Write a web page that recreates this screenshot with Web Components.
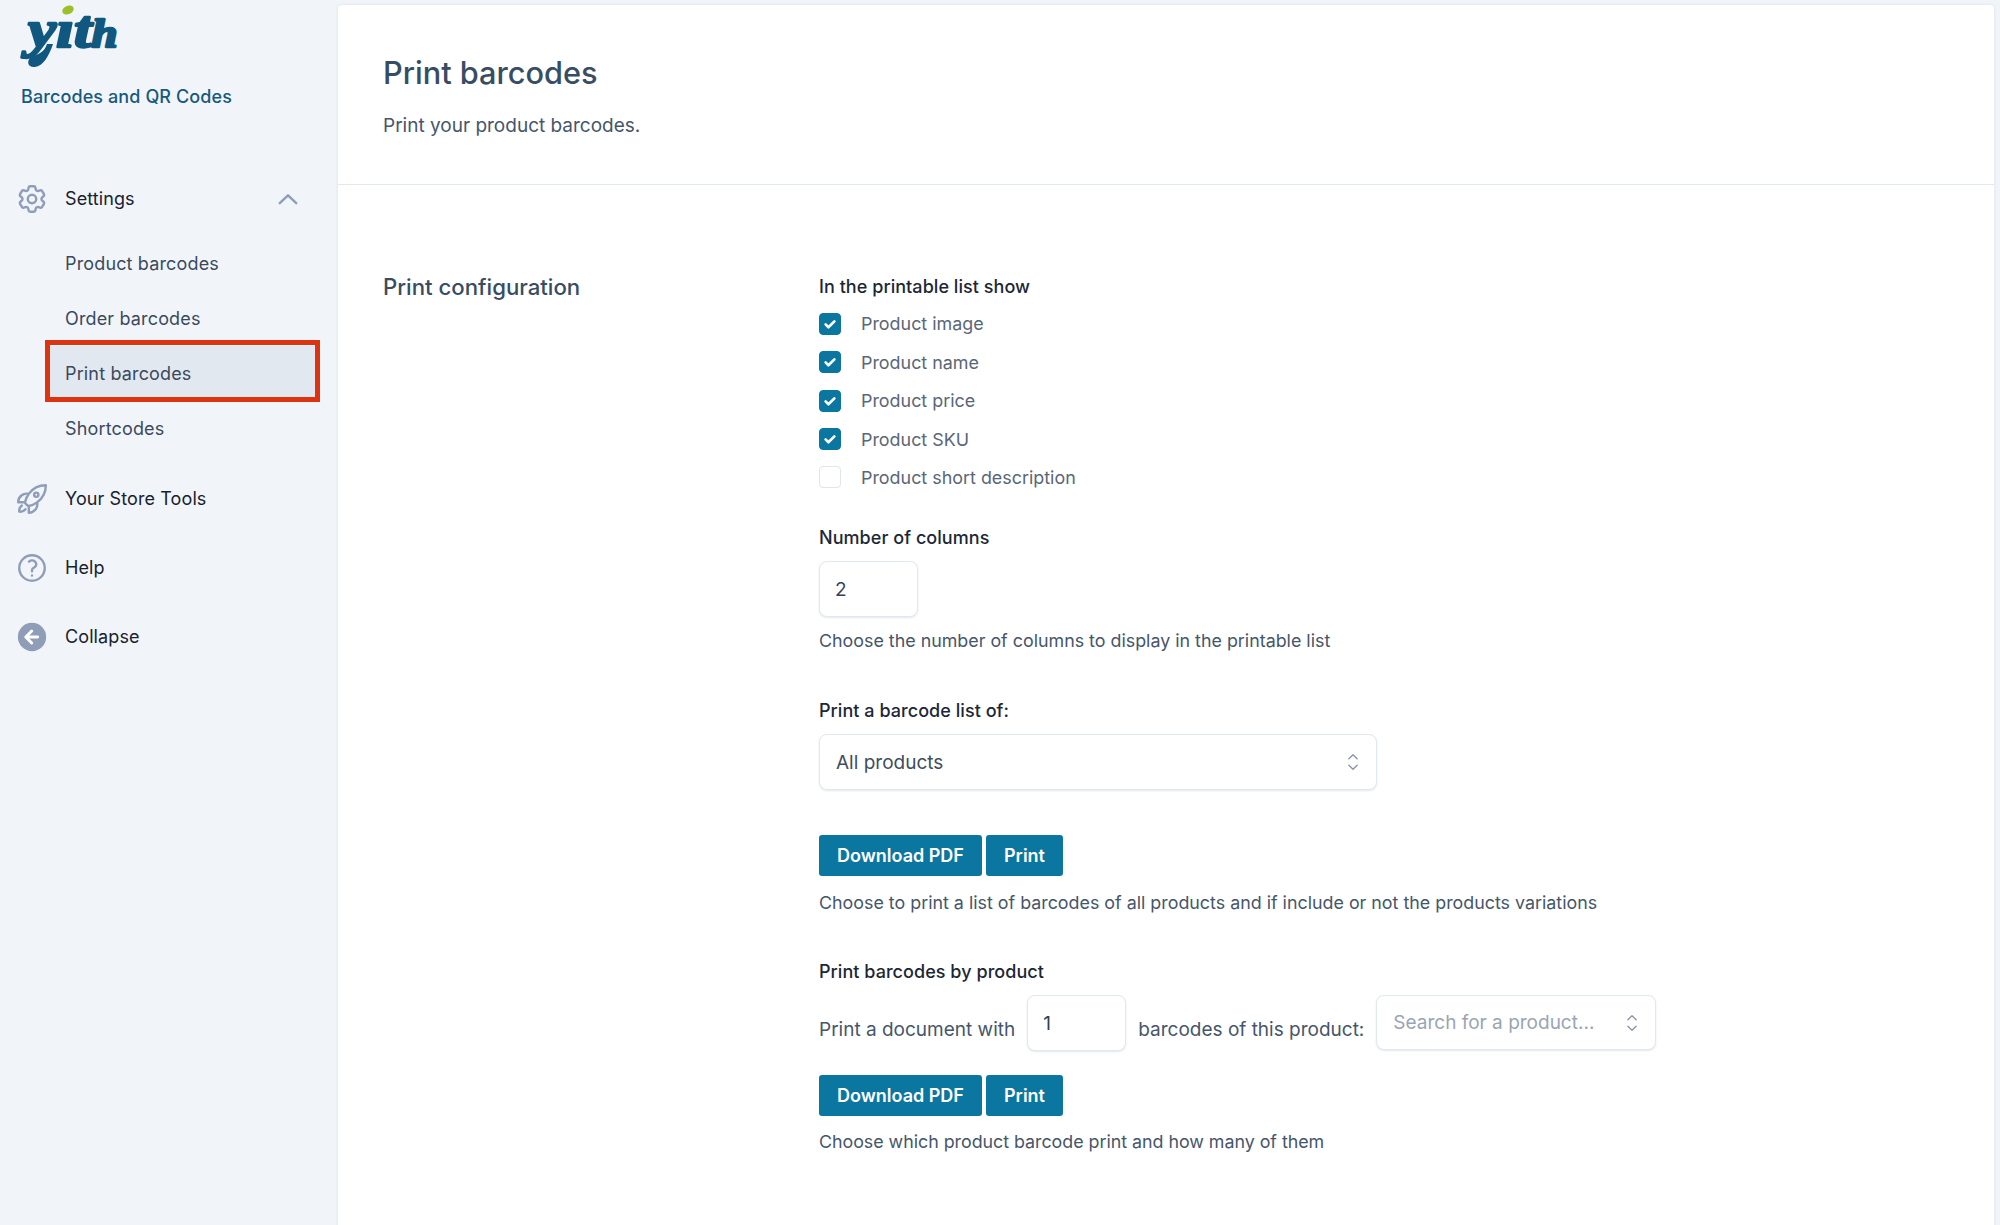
<!DOCTYPE html>
<html lang="en">
<head>
<meta charset="utf-8">
<title>Print barcodes</title>
<style>
    html, body { margin: 0; height: 100%; overflow: hidden; }
    body { background: #f1f5f9; font-family: Inter, "Liberation Sans", sans-serif; }
</style>
</head>
<body>
<yith-app>
    <yith-sidebar slot="side" name="Barcodes and QR Codes">
        <yith-nav-item icon="cog" open>Settings</yith-nav-item>
        <yith-sub-item style="margin-top:10px">Product barcodes</yith-sub-item>
        <yith-sub-item>Order barcodes</yith-sub-item>
        <yith-sub-item active>Print barcodes</yith-sub-item>
        <yith-sub-item>Shortcodes</yith-sub-item>
        <yith-nav-item icon="rocket" tall style="margin-top:8px">Your Store Tools</yith-nav-item>
        <yith-nav-item icon="help" tall>Help</yith-nav-item>
        <yith-nav-item icon="back" tall>Collapse</yith-nav-item>
    </yith-sidebar>

    <yith-page heading="Print barcodes" intro="Print your product barcodes.">
        <yith-section heading="Print configuration">
            <yith-label>In the printable list show</yith-label>
            <yith-check checked style="margin-top:5.7px">Product image</yith-check>
            <yith-check checked>Product name</yith-check>
            <yith-check checked>Product price</yith-check>
            <yith-check checked>Product SKU</yith-check>
            <yith-check>Product short description</yith-check>

            <yith-label style="margin-top:29px">Number of columns</yith-label>
            <yith-number value="2" style="margin-top:11px"></yith-number>
            <yith-hint style="margin-top:12px">Choose the number of columns to display in the printable list</yith-hint>

            <yith-label style="margin-top:46px">Print a barcode list of:</yith-label>
            <yith-select style="margin-top:11px;width:558px">All products</yith-select>
            <yith-actions style="margin-top:45px"></yith-actions>
            <yith-hint style="margin-top:15px">Choose to print a list of barcodes of all products and if include or not the products variations</yith-hint>

            <yith-label style="margin-top:45px">Print barcodes by product</yith-label>
            <yith-doc-row style="margin-top:11px"></yith-doc-row>
            <yith-actions style="margin-top:24px"></yith-actions>
            <yith-hint style="margin-top:14px;letter-spacing:-.03px">Choose which product barcode print and how many of them</yith-hint>
        </yith-section>
    </yith-page>
</yith-app>

<script>
    //Stroke paths for the sidebar icons, all on a 24 box
    const ICONS = {
        cog: `<path d="M9.594 3.94c.09-.542.56-.94 1.11-.94h2.593c.55 0 1.02.398 1.11.94l.213 1.281c.063.374.313.686.645.87.074.04.147.083.22.127.324.196.72.257 1.075.124l1.217-.456a1.125 1.125 0 011.37.49l1.296 2.247a1.125 1.125 0 01-.26 1.431l-1.003.827c-.293.24-.438.613-.431.992a6.759 6.759 0 010 .255c-.007.378.138.75.43.99l1.005.828c.424.35.534.954.26 1.43l-1.298 2.247a1.125 1.125 0 01-1.369.491l-1.217-.456c-.355-.133-.75-.072-1.076.124a6.57 6.57 0 01-.22.128c-.331.183-.581.495-.644.869l-.213 1.28c-.09.543-.56.941-1.11.941h-2.594c-.55 0-1.02-.398-1.11-.94l-.213-1.281c-.062-.374-.312-.686-.644-.87a6.52 6.52 0 01-.22-.127c-.325-.196-.72-.257-1.076-.124l-1.217.456a1.125 1.125 0 01-1.369-.49l-1.297-2.247a1.125 1.125 0 01.26-1.431l1.004-.827c.292-.24.437-.613.43-.992a6.932 6.932 0 010-.255c.007-.378-.138-.75-.43-.99l-1.004-.828a1.125 1.125 0 01-.26-1.43l1.297-2.247a1.125 1.125 0 011.37-.491l1.216.456c.356.133.751.072 1.076-.124.072-.044.146-.087.22-.128.332-.183.582-.495.644-.869l.214-1.281z"/><path d="M15 12a3 3 0 11-6 0 3 3 0 016 0z"/>`,
        rocket: `<path d="M15.59 14.37a6 6 0 01-5.84 7.38v-4.8m5.84-2.58a14.98 14.98 0 006.16-12.12A14.98 14.98 0 009.631 8.41m5.96 5.96a14.926 14.926 0 01-5.841 2.58m-.119-8.54a6 6 0 00-7.381 5.84h4.8m2.581-5.84a14.927 14.927 0 00-2.58 5.84m2.699 2.7c-.103.021-.207.041-.311.06a15.09 15.09 0 01-2.448-2.448 14.9 14.9 0 01.06-.312m-2.24 2.39a4.493 4.493 0 00-1.757 4.306 4.493 4.493 0 004.306-1.758M16.5 9a1.5 1.5 0 11-3 0 1.5 1.5 0 013 0z"/>`,
        help: `<path d="M9.879 7.519c1.171-1.025 3.071-1.025 4.242 0 1.172 1.025 1.172 2.687 0 3.712-.203.179-.43.326-.67.442-.745.361-1.45.999-1.45 1.827v.75M21 12a9 9 0 11-18 0 9 9 0 0118 0zm-9 5.25h.008v.008H12v-.008z"/>`,
        back: `<circle cx="12" cy="12" r="10" fill="#8f9db8" stroke="none"/><path d="M11.8 7.8L7.6 12l4.2 4.2M8 12h8" stroke="#fff" stroke-width="2.1"/>`
    };

    //Small helper so each element only has to state its markup
    function defineElement(name, css, html) {
        customElements.define(name, class extends HTMLElement {
            constructor() {
                super();
                const shadowRoot = this.attachShadow({mode: "open"});
                const body = typeof html === "function" ? html(this) : html;
                shadowRoot.innerHTML = `<style>${css}</style>${body}`;
            }
        });
    }

    defineElement("yith-app", `
        :host { display: flex; height: 100vh; overflow: hidden; }
    `, `<slot name="side"></slot><slot></slot>`);

    //Wordmark stays real text, the tail of the y is the only drawn part
    defineElement("yith-logo", `
        :host { display: block; width: 110px; height: 68px; margin-left: 14px; }
        svg { display: block; overflow: visible; }
        text { font: italic bold 53px "Liberation Serif", serif; fill: #10587f; stroke: #10587f; stroke-width: 2.4; stroke-linejoin: round; }
        .small { font-size: 39px; }
    `, `<svg width="110" height="68" viewBox="0 0 110 68" aria-label="yith">
            <text transform="translate(14 47) scale(1.2 1)">y\u0131t<tspan class="small">h</tspan></text>
            <path d="M33 44C30 53 24 54 17 57C12 61 14 68 21 67C29 66 35 56 39 44Z" fill="#10587f"/>
            <ellipse cx="54" cy="10" rx="6" ry="4.2" transform="rotate(-25 54 10)" fill="#9dbf2b"/>
        </svg>`);

    defineElement("yith-sidebar", `
        :host { display: block; flex: 0 0 338px; width: 338px; box-sizing: border-box; }
        .name {
            margin: 16px 0 0 21px;
            font-size: 18px; letter-spacing: .1px; line-height: 26px; font-weight: 500; color: #17597c;
        }
        nav { margin-top: 61px; display: block; }
    `, host => `<yith-logo></yith-logo>
        <div class="name">${host.getAttribute("name")}</div>
        <nav><slot></slot></nav>`);

    defineElement("yith-nav-item", `
        :host {
            display: flex; align-items: center; height: 55px;
            font-size: 18px; letter-spacing: .1px; font-weight: 400; color: #18212f; position: relative;
        }
        :host([tall]) { height: 69px; }
        .icon { width: 34px; height: 34px; margin-left: 15px; margin-right: 16px; flex: none; }
        .icon svg { display: block; fill: none; stroke: #8f9db8; stroke-width: 1.7; stroke-linecap: round; stroke-linejoin: round; }
        .chev { margin-left: auto; margin-right: 39px; width: 22px; height: 22px; fill: none; stroke: #8f9db8; stroke-width: 2.6; stroke-linecap: round; stroke-linejoin: round; }
    `, host => `<span class="icon"><svg viewBox="0 0 24 24" width="34" height="34">${ICONS[host.getAttribute("icon")]}</svg></span>
        <slot></slot>
        ${host.hasAttribute("open") ? `<svg class="chev" viewBox="0 0 24 24"><path d="M3 16.5L12 8l9 8.5"/></svg>` : ""}`);

    defineElement("yith-sub-item", `
        :host {
            display: flex; align-items: center; height: 55px; width: 275px;
            margin-left: 45px; padding-left: 20px; box-sizing: border-box;
            font-size: 18px; letter-spacing: .15px; color: #3a4a5e; position: relative;
        }
        :host([active]) { background: #e2e8f0; }
        :host([active])::after {
            content: ""; position: absolute; left: 0; right: 0; top: -6px; bottom: -1px;
            border: 5px solid #dd3311;
        }
    `, `<slot></slot>`);

    defineElement("yith-page", `
        :host {
            display: block; flex: 0 0 1656px; width: 1656px; height: 1300px; margin-top: 5px;
            background: #fff; border-radius: 4px 4px 0 0; box-shadow: 0 0 3px rgba(148,163,184,.25);
        }
        header { height: 180px; box-sizing: border-box; padding: 48px 0 0 45px; border-bottom: 1px solid #e2e8f0; }
        h1 { margin: 0; font-size: 30.7px; line-height: 40px; font-weight: 500; color: #374d63; }
        p { margin: 21px 0 0; font-size: 19px; line-height: 24px; color: #46566a; }
    `, host => `<header>
            <h1>${host.getAttribute("heading")}</h1>
            <p>${host.getAttribute("intro")}</p>
        </header>
        <slot></slot>`);

    defineElement("yith-section", `
        :host { display: grid; grid-template-columns: 436px 1fr; padding: 90px 0 0 45px; }
        h2 { margin: 0; font-size: 22.2px; line-height: 24px; font-weight: 500; color: #374d63; }
    `, host => `<h2>${host.getAttribute("heading")}</h2><div><slot></slot></div>`);

    defineElement("yith-label", `
        :host { display: block; font-size: 18px; letter-spacing: .05px; line-height: 24px; font-weight: 450; color: #1c2736; }
    `, `<slot></slot>`);

    defineElement("yith-hint", `
        :host { display: block; font-size: 17.85px; line-height: 24px; color: #46566a; }
    `, `<slot></slot>`);

    defineElement("yith-check", `
        :host { display: flex; align-items: center; height: 38.4px; font-size: 17.9px; color: #5a6778; }
        .box {
            width: 22px; height: 22px; box-sizing: border-box; border-radius: 4px; margin-right: 20px;
            border: 1px solid #dfe5ec; background: #fff; display: flex; align-items: center; justify-content: center;
        }
        :host([checked]) .box { background: #0b76a0; border-color: #0b76a0; }
        svg { width: 14px; height: 14px; fill: none; stroke: #fff; stroke-width: 3; stroke-linecap: round; stroke-linejoin: round; }
    `, host => `<span class="box">${host.hasAttribute("checked") ? `<svg viewBox="0 0 16 16"><path d="M3 8.5l3.2 3.2L13 5"/></svg>` : ""}</span><slot></slot>`);

    defineElement("yith-number", `
        :host {
            display: flex; align-items: center; width: 99px; height: 56px; box-sizing: border-box;
            padding: 1px 0 0 15px; border: 1px solid #e2e8f0; border-radius: 8px; background: #fff;
            box-shadow: 0 1px 2px rgba(148,163,184,.25); font-size: 19px; color: #334155;
        }
    `, host => `<span>${host.getAttribute("value")}</span>`);

    defineElement("yith-select", `
        :host {
            display: flex; align-items: center; justify-content: space-between; height: 56px; box-sizing: border-box;
            padding: 1px 12px 0 16px; border: 1px solid #e2e8f0; border-radius: 8px; background: #fff;
            box-shadow: 0 1px 2px rgba(148,163,184,.25); font-size: 19px; color: #3f4d60;
        }
        :host([placeholder]) { color: #9aa5b4; }
        svg { width: 22px; height: 22px; fill: none; stroke: #8a96a8; stroke-width: 1.5; stroke-linecap: round; stroke-linejoin: round; }
    `, `<slot></slot><svg viewBox="0 0 24 24"><path d="M7.5 8.5L12 4l4.5 4.5M7.5 15.5L12 20l4.5-4.5"/></svg>`);

    defineElement("yith-button", `
        :host {
            display: inline-flex; align-items: center; height: 41px; box-sizing: border-box; padding: 1px 18px 0;
            background: #0b76a0; border-radius: 3px; color: #fff; font-size: 18px; font-weight: 600;
        }
    `, `<slot></slot>`);

    defineElement("yith-actions", `
        :host { display: flex; gap: 4px; }
    `, `<yith-button>Download PDF</yith-button><yith-button>Print</yith-button>`);

    defineElement("yith-doc-row", `
        :host { display: flex; align-items: flex-start; width: 860px; height: 56px; font-size: 19px; color: #46566a; }
        span { line-height: 24px; margin-top: 23px; white-space: nowrap; }
        yith-number { margin: 0 12px; }
        yith-select { flex: 0 0 280px; margin-left: 12px; height: 55px; }
    `, `<span>Print a document with</span>
        <yith-number value="1"></yith-number>
        <span>barcodes of this product:</span>
        <yith-select placeholder>Search for a product...</yith-select>`);
</script>
</body>
</html>
